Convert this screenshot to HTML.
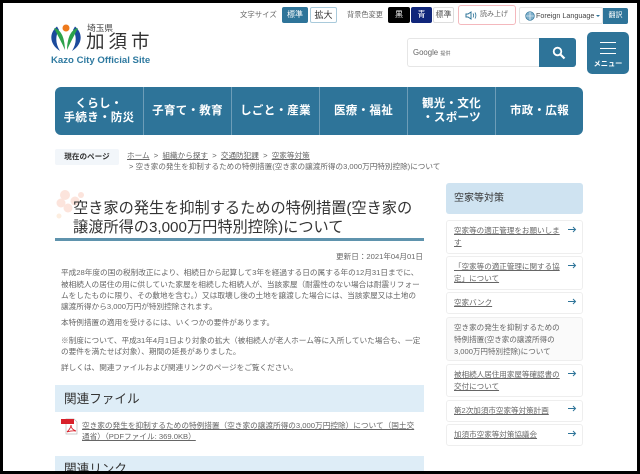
<!DOCTYPE html>
<html lang="ja"><head><meta charset="utf-8"><title>空き家の発生を抑制するための特例措置</title>
<style>
html,body{margin:0;padding:0;width:640px;height:474px;overflow:hidden;background:#000}
#p{position:absolute;left:3px;top:3px;width:634px;height:468px;background:#fff;overflow:hidden}
#w{position:absolute;left:0;top:0;width:640px;height:474px;overflow:hidden;font-family:"Liberation Sans","Noto Sans CJK JP",sans-serif;color:#555}
#w div,#w a,#w svg{position:absolute;display:block}
.t{white-space:nowrap}
.btn{border-radius:2px;text-align:center;font-size:8px;line-height:16px;height:16px;box-sizing:border-box}
.n{top:87px;height:48px;color:#fff;font-weight:700;font-size:11.5px;line-height:14px;text-align:center;display:flex!important;align-items:center;justify-content:center;letter-spacing:.3px}
.sep{top:87px;width:1px;height:48px;background:#6d9db8}
.b{left:61px;font-size:7.65px;line-height:12px;white-space:nowrap;color:#666}
.s{left:446px;width:137px;box-sizing:border-box;border:1px solid #eee;border-radius:3px;background:#fff}
.s span{position:absolute;left:7px;top:4px;font-size:7.55px;line-height:12px;color:#666;text-decoration:underline;white-space:nowrap}
</style></head><body>
<div id="p"></div>
<div id="w">
<!-- logo -->
<svg style="left:50px;top:24px" width="32" height="28" viewBox="0 0 32 28">
<circle cx="16" cy="4" r="3.5" fill="#ee7a1c"/>
<path d="M7 2.5C-1 9-1 20 10 27C5.500 20 5 12 9 6Z" fill="#1c4a9c"/>
<path d="M25 2.500C33 9 33 20 22 27C26.500 20 27 12 23 6Z" fill="#1c4a9c"/>
<path d="M4 4C10 5.500 14.500 11 15 26C12 19 8 12 4 4Z" fill="#2ca24a"/>
<path d="M28 4C22 5.500 17.500 11 17 26C20 19 24 12 28 4Z" fill="#2ca24a"/>
</svg>
<div class="t" style="left:87px;top:23px;font-size:8.7px;line-height:10px;color:#444">埼玉県</div>
<div class="t" style="left:86px;top:30px;font-size:18.500px;line-height:24px;color:#333;letter-spacing:4px">加須市</div>
<div class="t" style="left:51px;top:55px;font-size:9.6px;line-height:12px;font-weight:700;color:#2f7aa0">Kazo City Official Site</div>
<!-- top tools -->
<div class="t" style="left:240px;top:10px;font-size:7.4px;line-height:10px;color:#666">文字サイズ</div>
<div class="btn" style="left:282px;top:7px;width:26px;background:#2e7499;color:#fff">標準</div>
<div class="btn" style="left:310px;top:7px;width:27px;background:#fff;border:1px solid #a9cadb;color:#333;font-size:9px;line-height:14px">拡大</div>
<div class="t" style="left:347px;top:10px;font-size:7.2px;line-height:10px;color:#666">背景色変更</div>
<div class="btn" style="left:388px;top:7px;width:22px;background:#000;color:#fff">黒</div>
<div class="btn" style="left:411px;top:7px;width:21px;background:#10267a;color:#fff">青</div>
<div class="btn" style="left:433px;top:7px;width:21px;background:#fff;border:1px solid #ddd;color:#555;line-height:14px">標準</div>
<div style="left:458px;top:5px;width:58px;height:20px;box-sizing:border-box;border:1px solid #f4b8bd;border-radius:3px;background:#fff"></div>
<svg style="left:465px;top:11px" width="12" height="9" viewBox="0 0 12 9"><path d="M1 3H3L6 1V8L3 6H1Z" fill="none" stroke="#2e7499" stroke-width="1"/><path d="M8 2.500C9 4 9 5 8 6.500M10 1.500C11.200 3.500 11.200 5.500 10 7.500" fill="none" stroke="#2e7499" stroke-width=".8"/></svg>
<div class="t" style="left:480px;top:10px;font-size:7px;line-height:10px;color:#666">読み上げ</div>
<div style="left:519px;top:7px;width:84px;height:17px;box-sizing:border-box;border:1px solid #e4e4e4;border-radius:2px;background:#fff"></div>
<svg style="left:525px;top:11px" width="10" height="10" viewBox="0 0 10 10"><circle cx="5" cy="5" r="4.300" fill="#7fb0cc" stroke="#2e7499" stroke-width=".7"/><path d="M1 5H9M5 1V9" stroke="#fff" stroke-width=".6"/></svg>
<div class="t" style="left:536px;top:11px;font-size:7.2px;line-height:10px;color:#444">Foreign Language</div>
<div style="left:596px;top:15px;width:0;height:0;border-left:2px solid transparent;border-right:2px solid transparent;border-top:2.500px solid #2e7499"></div>
<div class="btn" style="left:603px;top:8px;width:25px;background:#2e7499;color:#fff;font-size:7px;border-radius:0 2px 2px 0">翻訳</div>
<!-- search -->
<div style="left:407px;top:38px;width:133px;height:29px;box-sizing:border-box;border:1px solid #e6e6e6;border-right:0;border-radius:3px 0 0 3px;background:#fff"></div>
<div class="t" style="left:413px;top:48px;font-size:7.800px;line-height:10px;color:#666">Google <span style="font-size:5px">提供</span></div>
<div style="left:539px;top:38px;width:37px;height:29px;background:#2e7499;border-radius:0 3px 3px 0"></div>
<svg style="left:552px;top:46px" width="14" height="14" viewBox="0 0 14 14"><circle cx="5.500" cy="5.500" r="3.800" fill="none" stroke="#fff" stroke-width="1.800"/><path d="M8.500 8.500L12.500 12.500" stroke="#fff" stroke-width="2.200"/></svg>
<!-- menu -->
<div style="left:587px;top:32px;width:42px;height:42px;background:#2e7499;border-radius:5px"></div>
<div style="left:600px;top:42px;width:16px;height:1px;background:#fff"></div>
<div style="left:600px;top:48px;width:16px;height:1px;background:#fff"></div>
<div style="left:600px;top:53px;width:16px;height:1px;background:#fff"></div>
<div class="t" style="left:587px;top:59px;width:42px;text-align:center;font-size:7.200px;line-height:10px;color:#fff;font-weight:700">メニュー</div>
<!-- nav -->
<div style="left:55px;top:87px;width:528px;height:48px;background:#2e7499;border-radius:6px"></div>
<div class="n" style="left:55px;width:88px">くらし・<br>手続き・防災</div>
<div class="sep" style="left:143px"></div>
<div class="n" style="left:144px;width:87px">子育て・教育</div>
<div class="sep" style="left:231px"></div>
<div class="n" style="left:232px;width:87px">しごと・産業</div>
<div class="sep" style="left:319px"></div>
<div class="n" style="left:320px;width:87px">医療・福祉</div>
<div class="sep" style="left:407px"></div>
<div class="n" style="left:408px;width:87px">観光・文化<br>・スポーツ</div>
<div class="sep" style="left:495px"></div>
<div class="n" style="left:496px;width:87px">市政・広報</div>
<!-- breadcrumb -->
<div style="left:55px;top:149px;width:64px;height:16px;background:#f2f6fa;border-radius:2px"></div>
<div class="t" style="left:55px;top:152px;width:64px;text-align:center;font-size:7.600px;line-height:10px;color:#333;font-weight:700">現在のページ</div>
<div class="t" style="left:127px;top:151px;font-size:7.600px;line-height:10px;color:#666"><u>ホーム</u>&nbsp;&nbsp;&gt;&nbsp;&nbsp;<u>組織から探す</u>&nbsp;&nbsp;&gt;&nbsp;&nbsp;<u>交通防犯課</u>&nbsp;&nbsp;&gt;&nbsp;&nbsp;<u>空家等対策</u></div>
<div class="t" style="left:129px;top:162px;font-size:7.600px;line-height:10px;color:#666">&gt;&nbsp;空き家の発生を抑制するための特例措置(空き家の譲渡所得の3,000万円特別控除)について</div>
<!-- title -->
<svg style="left:55px;top:187px" width="34" height="44" viewBox="0 0 34 44"><g fill="#fce4dc"><circle cx="10" cy="8" r="5"/><circle cx="6" cy="16" r="4.500"/><circle cx="13" cy="21" r="4.500"/><circle cx="20" cy="14" r="4.500"/><circle cx="26" cy="8" r="3"/><circle cx="4" cy="29" r="2.500" fill="#fdeee0"/></g></svg>
<div class="t" style="left:73px;top:199px;font-size:15.200px;line-height:19px;color:#333">空き家の発生を抑制するための特例措置(空き家の<br>譲渡所得の3,000万円特別控除)について</div>
<div style="left:55px;top:238px;width:369px;height:3px;background:#5f93ad"></div>
<div class="t" style="right:217px;top:252px;font-size:7.600px;line-height:10px;color:#666">更新日：2021年04月01日</div>
<!-- body -->
<div class="b" style="top:267px">平成28年度の国の税制改正により、相続日から起算して3年を経過する日の属する年の12月31日までに、</div>
<div class="b" style="top:279px">被相続人の居住の用に供していた家屋を相続した相続人が、当該家屋（耐震性のない場合は耐震リフォー</div>
<div class="b" style="top:290px">ムをしたものに限り、その敷地を含む。）又は取壊し後の土地を譲渡した場合には、当該家屋又は土地の</div>
<div class="b" style="top:301px">譲渡所得から3,000万円が特別控除されます。</div>
<div class="b" style="top:317px">本特例措置の適用を受けるには、いくつかの要件があります。</div>
<div class="b" style="top:335px">※制度について、平成31年4月1日より対象の拡大（被相続人が老人ホーム等に入所していた場合も、一定</div>
<div class="b" style="top:346px">の要件を満たせば対象）、期間の延長がありました。</div>
<div class="b" style="top:362px">詳しくは、関連ファイルおよび関連リンクのページをご覧ください。</div>
<!-- related -->
<div style="left:55px;top:385px;width:369px;height:27px;background:#deedf7"></div>
<div class="t" style="left:64px;top:391px;font-size:12.600px;line-height:16px;color:#333">関連ファイル</div>
<svg style="left:60px;top:418px" width="18" height="17" viewBox="0 0 18 17"><path d="M6 1H14L17 4V16H6Z" fill="#fff" stroke="#bbb" stroke-width=".7"/><rect x="1" y="1" width="13" height="5" fill="#d8202a"/><path d="M7 14C10 11 11 9 11 7C11 10 13 12 16 13C13 12.500 10 13 7 14Z" fill="none" stroke="#d8202a" stroke-width=".9"/></svg>
<div class="b" style="left:82px;top:420px;line-height:12px;color:#666;text-decoration:underline">空き家の発生を抑制するための特例措置（空き家の譲渡所得の3,000万円控除）について（国土交</div>
<div class="b" style="left:82px;top:431px;line-height:12px;color:#666;text-decoration:underline">通省）（PDFファイル: 369.0KB）</div>
<div style="left:55px;top:456px;width:369px;height:18px;background:#deedf7"></div>
<div class="t" style="left:64px;top:461px;font-size:12.600px;line-height:16px;color:#333">関連リンク</div>
<!-- sidebar -->
<div style="left:446px;top:183px;width:137px;height:31px;background:#cfe3f1;border-radius:3px"></div>
<div class="t" style="left:454px;top:192px;font-size:10px;line-height:13px;color:#333">空家等対策</div>
<div class="s" style="top:220px;height:34px"><span>空家等の適正管理をお願いしま<br>す</span></div>
<div class="s" style="top:256px;height:34px"><span>「空家等の適正管理に関する協<br>定」について</span></div>
<div class="s" style="top:292px;height:22px"><span>空家バンク</span></div>
<div class="s" style="top:317px;height:44px;background:#fafafa"><span style="text-decoration:none">空き家の発生を抑制するための<br>特例措置(空き家の譲渡所得の<br>3,000万円特別控除)について</span></div>
<div class="s" style="top:364px;height:33px"><span>被相続人居住用家屋等確認書の<br>交付について</span></div>
<div class="s" style="top:400px;height:22px"><span>第2次加須市空家等対策計画</span></div>
<div class="s" style="top:424px;height:22px"><span>加須市空家等対策協議会</span></div>
<svg style="left:567px;top:226px" width="10" height="7" viewBox="0 0 10 7"><path d="M1 3.500H8.500M6 1L8.500 3.500L6 6" fill="none" stroke="#2e7499"/></svg>
<svg style="left:567px;top:262px" width="10" height="7" viewBox="0 0 10 7"><path d="M1 3.500H8.500M6 1L8.500 3.500L6 6" fill="none" stroke="#2e7499"/></svg>
<svg style="left:567px;top:298px" width="10" height="7" viewBox="0 0 10 7"><path d="M1 3.500H8.500M6 1L8.500 3.500L6 6" fill="none" stroke="#2e7499"/></svg>
<svg style="left:567px;top:370px" width="10" height="7" viewBox="0 0 10 7"><path d="M1 3.500H8.500M6 1L8.500 3.500L6 6" fill="none" stroke="#2e7499"/></svg>
<svg style="left:567px;top:405px" width="10" height="7" viewBox="0 0 10 7"><path d="M1 3.500H8.500M6 1L8.500 3.500L6 6" fill="none" stroke="#2e7499"/></svg>
<svg style="left:567px;top:430px" width="10" height="7" viewBox="0 0 10 7"><path d="M1 3.500H8.500M6 1L8.500 3.500L6 6" fill="none" stroke="#2e7499"/></svg>
</div>
<div style="position:absolute;left:0;top:471px;width:640px;height:3px;background:#000"></div>
<div style="position:absolute;left:637px;top:0;width:3px;height:474px;background:#000"></div>
<div style="position:absolute;left:0;top:0;width:640px;height:3px;background:#000"></div>
<div style="position:absolute;left:0;top:0;width:3px;height:474px;background:#000"></div>
</body></html>
